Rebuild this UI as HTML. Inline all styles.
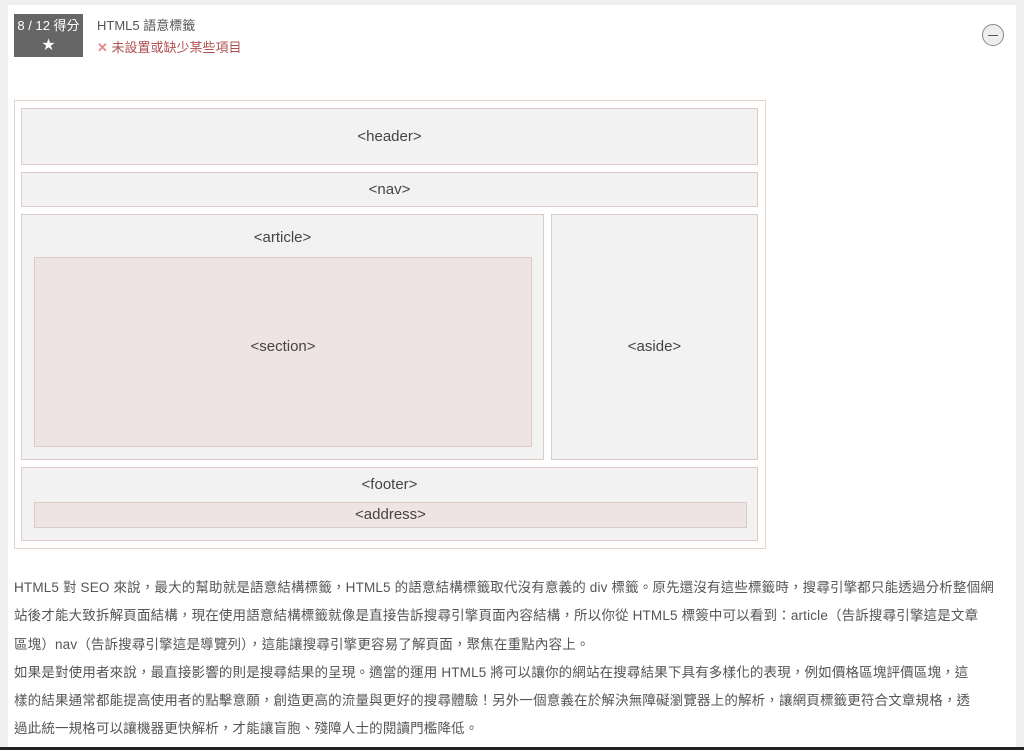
<!DOCTYPE html>
<html><head><meta charset="utf-8"><style>
html,body{margin:0;padding:0;}
body{width:1024px;height:750px;background:#f0f0f0;position:relative;overflow:hidden;font-family:"Liberation Sans","Noto Sans CJK TC",sans-serif;}
.card{position:absolute;left:8px;top:5px;width:1008px;height:742px;background:#fff;}
.bar{position:absolute;left:0;top:747px;width:1024px;height:3px;background:#222;}
.score{position:absolute;left:14px;top:14px;width:69px;height:43px;background:#666;color:#fff;text-align:center;font-size:13px;line-height:19px;padding-top:2px;box-sizing:border-box;}
.t1{position:absolute;left:97px;top:15px;font-size:13px;color:#555;}
.t2{position:absolute;left:97px;top:37px;font-size:13px;color:#b05050;}
.x{color:#e08a8a;font-weight:bold;}
.minus{position:absolute;left:982px;top:24px;width:22px;height:22px;border:1px solid #888;border-radius:50%;background:#eee;box-sizing:border-box;}
.minus:after{content:"";position:absolute;left:5px;top:10px;width:10px;height:1px;background:#555;}
.b{position:absolute;box-sizing:border-box;border:1px solid #dcccc6;background:#f2f2f2;color:#444;font-size:15px;text-align:center;}
.s{background:#efe4e4;}
.txt{position:absolute;left:14px;top:574px;font-size:13.5px;line-height:28.3px;color:#555;white-space:nowrap;letter-spacing:0.16px;}
</style></head><body>
<div class="card"></div>
<div class="bar"></div>
<div class="score">8 / 12 得分<br>★</div>
<div class="t1">HTML5 語意標籤</div>
<div class="t2"><span class="x">✕</span> 未設置或缺少某些項目</div>
<div class="minus"></div>
<div class="b" style="left:14px;top:100px;width:752px;height:449px;background:#fff;border-color:#e2d6cc"></div>
<div class="b" style="left:21px;top:108px;width:737px;height:57px;line-height:55px">&lt;header&gt;</div>
<div class="b" style="left:21px;top:172px;width:737px;height:35px;line-height:33px">&lt;nav&gt;</div>
<div class="b" style="left:21px;top:214px;width:523px;height:246px;padding-top:14px">&lt;article&gt;</div>
<div class="b s" style="left:34px;top:257px;width:498px;height:190px;line-height:178px">&lt;section&gt;</div>
<div class="b" style="left:551px;top:214px;width:207px;height:246px;line-height:264px">&lt;aside&gt;</div>
<div class="b" style="left:21px;top:467px;width:737px;height:74px;padding-top:8px">&lt;footer&gt;</div>
<div class="b s" style="left:34px;top:502px;width:713px;height:26px;line-height:24px">&lt;address&gt;</div>
<div class="txt">HTML5 對 SEO 來說，最大的幫助就是語意結構標籤，HTML5 的語意結構標籤取代沒有意義的 div 標籤。原先還沒有這些標籤時，搜尋引擎都只能透過分析整個網<br>站後才能大致拆解頁面結構，現在使用語意結構標籤就像是直接告訴搜尋引擎頁面內容結構，所以你從 HTML5 標簽中可以看到：article（告訴搜尋引擎這是文章<br>區塊）nav（告訴搜尋引擎這是導覽列），這能讓搜尋引擎更容易了解頁面，聚焦在重點內容上。<br>如果是對使用者來說，最直接影響的則是搜尋結果的呈現。適當的運用 HTML5 將可以讓你的網站在搜尋結果下具有多樣化的表現，例如價格區塊評價區塊，這<br>樣的結果通常都能提高使用者的點擊意願，創造更高的流量與更好的搜尋體驗！另外一個意義在於解決無障礙瀏覽器上的解析，讓網頁標籤更符合文章規格，透<br>過此統一規格可以讓機器更快解析，才能讓盲胞、殘障人士的閱讀門檻降低。</div>
</body></html>
